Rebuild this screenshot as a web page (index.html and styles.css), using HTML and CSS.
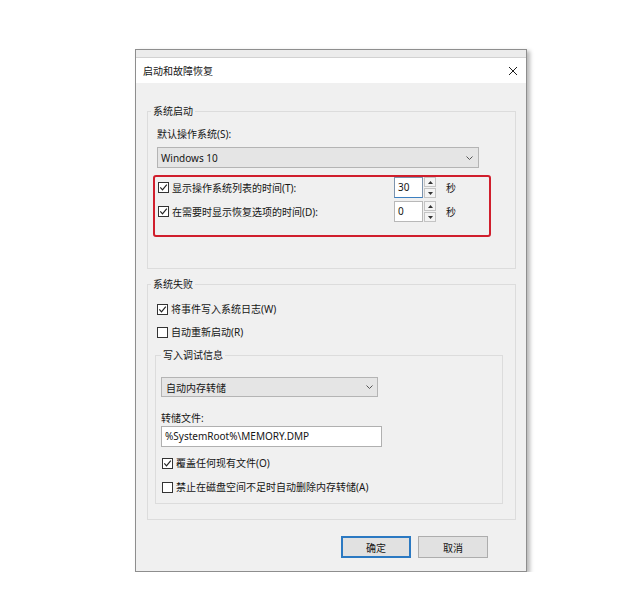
FILE: index.html
```html
<!DOCTYPE html>
<html lang="zh-CN">
<head>
<meta charset="utf-8">
<title>启动和故障恢复</title>
<link rel="stylesheet" href="styles.css">
</head>
<body>
<div class="window">
  <div class="strip"></div>
  <div class="titlebar">
    <span class="title">启动和故障恢复</span>
    <svg class="close" width="10" height="10" viewBox="0 0 10 10"><path d="M1 1L9 9M9 1L1 9" stroke="#1e1e1e" stroke-width="1" fill="none"/></svg>
  </div>
  <div class="client">
    <fieldset class="group g1">
      <legend>系统启动</legend>
      <div class="field-label">默认操作系统(S):</div>
      <div class="combo combo-os"><span>Windows 10</span><svg width="7" height="4" viewBox="0 0 7 4"><path d="M0.5 0.5L3.5 3.5L6.5 0.5" stroke="#555" stroke-width="1" fill="none"/></svg></div>
      <div class="highlight">
        <div class="trow">
          <label class="check"><span class="cb"><svg width="9" height="9" viewBox="0 0 9 9"><path d="M1.3 4.4L3.5 6.8L7.8 1.6" stroke="#222" stroke-width="1.2" fill="none"/></svg></span>显示操作系统列表的时间(T):</label>
          <div class="spin"><span class="spin-val focus">30</span><span class="spin-btns"><span class="sb"><svg width="5" height="3" viewBox="0 0 5 3"><path d="M0 3L2.5 0L5 3Z" fill="#333"/></svg></span><span class="sb"><svg width="5" height="3" viewBox="0 0 5 3"><path d="M0 0L2.5 3L5 0Z" fill="#333"/></svg></span></span></div>
          <span class="unit">秒</span>
        </div>
        <div class="trow trow2">
          <label class="check"><span class="cb"><svg width="9" height="9" viewBox="0 0 9 9"><path d="M1.3 4.4L3.5 6.8L7.8 1.6" stroke="#222" stroke-width="1.2" fill="none"/></svg></span>在需要时显示恢复选项的时间(D):</label>
          <div class="spin"><span class="spin-val">0</span><span class="spin-btns"><span class="sb"><svg width="5" height="3" viewBox="0 0 5 3"><path d="M0 3L2.5 0L5 3Z" fill="#333"/></svg></span><span class="sb"><svg width="5" height="3" viewBox="0 0 5 3"><path d="M0 0L2.5 3L5 0Z" fill="#333"/></svg></span></span></div>
          <span class="unit">秒</span>
        </div>
      </div>
    </fieldset>

    <fieldset class="group g2">
      <legend>系统失败</legend>
      <label class="check row"><span class="cb"><svg width="9" height="9" viewBox="0 0 9 9"><path d="M1.3 4.4L3.5 6.8L7.8 1.6" stroke="#222" stroke-width="1.2" fill="none"/></svg></span>将事件写入系统日志(W)</label>
      <label class="check row row-b"><span class="cb"></span>自动重新启动(R)</label>
      <fieldset class="group g3">
        <legend>写入调试信息</legend>
        <div class="combo combo-dump"><span>自动内存转储</span><svg width="7" height="4" viewBox="0 0 7 4"><path d="M0.5 0.5L3.5 3.5L6.5 0.5" stroke="#555" stroke-width="1" fill="none"/></svg></div>
        <div class="field-label tight">转储文件:</div>
        <div class="textbox">%SystemRoot%\MEMORY.DMP</div>
        <label class="check row inner-row"><span class="cb"><svg width="9" height="9" viewBox="0 0 9 9"><path d="M1.3 4.4L3.5 6.8L7.8 1.6" stroke="#222" stroke-width="1.2" fill="none"/></svg></span>覆盖任何现有文件(O)</label>
        <label class="check row inner-row"><span class="cb"></span>禁止在磁盘空间不足时自动删除内存转储(A)</label>
      </fieldset>
    </fieldset>

    <div class="buttons">
      <button class="btn btn-default">确定</button>
      <button class="btn">取消</button>
    </div>
  </div>
</div>
</body>
</html>
```

FILE: styles.css
```css
html, body {
  margin: 0;
  background: #ffffff;
}
body {
  padding: 49px 0 0 135px;
  font-family: "Noto Sans", "Noto Sans CJK SC", sans-serif;
  font-size: 10px;
  color: #151515;
}
.window {
  width: 390px;
  border: 1px solid #8e8e8e;
  background: #f0f0f0;
  box-shadow: 3px 2px 4px rgba(0, 0, 0, 0.28);
}
.strip {
  height: 7px;
  background: #ececec;
  border-bottom: 1px solid #d2d2d2;
}
.titlebar {
  height: 25px;
  background: #ffffff;
  display: flex;
  align-items: center;
  justify-content: space-between;
  padding: 0 8px 0 7px;
}
.title {
  line-height: 14px;
}
.close {
  display: block;
}
.client {
  padding: 22px 10px 13px 11px;
}
.group {
  margin: 0;
  border: 1px solid #dcdcdc;
  min-width: 0;
}
.group legend {
  padding: 0 2px;
  line-height: 12px;
  font-size: 10px;
}
.g1 {
  padding: 10px 9px 31px 9px;
}
.g1 > legend,
.g2 > legend {
  margin-left: -6px;
}
.g2 {
  margin-top: 9px;
  padding: 11px 12px 15px 9px;
}
.g3 {
  margin: 9px 0 0 -2px;
  padding: 16px 5px 8px 5px;
}
.g3 > legend {
  margin-left: 0;
}
.field-label {
  line-height: 14px;
  margin-bottom: 6px;
}
.field-label.tight {
  margin-top: 14px;
  margin-bottom: 1px;
}
.combo {
  box-sizing: border-box;
  border: 1px solid #b4b4b4;
  background: #e5e5e5;
  display: flex;
  align-items: center;
  justify-content: space-between;
}
.combo svg {
  display: block;
}
.combo-os {
  width: 322px;
  height: 21px;
  padding: 0 5px 0 3px;
  margin-bottom: 7px;
}
.combo-dump {
  width: 217px;
  height: 20px;
  padding: 0 4px 0 4px;
}
.highlight {
  box-sizing: border-box;
  width: 338px;
  margin-left: -4px;
  border: 2px solid #d01e2c;
  border-radius: 3px;
  padding: 0 33px 13px 3px;
}
.trow {
  display: flex;
  align-items: center;
  height: 21px;
}
.trow2 {
  margin-top: 3px;
}
.check {
  display: flex;
  align-items: center;
  gap: 3px;
  line-height: 14px;
}
.trow .check {
  flex: 1;
}
.cb {
  box-sizing: border-box;
  width: 11px;
  height: 11px;
  border: 1px solid #333333;
  background: #ffffff;
  display: flex;
  align-items: center;
  justify-content: center;
  flex: none;
}
.cb svg {
  display: block;
}
.row {
  height: 16px;
}
.row-b {
  margin-top: 7px;
}
.inner-row {
  margin-top: 8px;
  margin-left: 1px;
}
.spin {
  display: flex;
  width: 42px;
  height: 21px;
}
.spin-val {
  box-sizing: border-box;
  width: 29px;
  height: 21px;
  border: 1px solid #b8b8b8;
  background: #ffffff;
  padding-left: 3px;
  line-height: 19px;
}
.spin-val.focus {
  border-color: #7c93ad;
  border-bottom-color: #3c7fc0;
}
.spin-btns {
  margin-left: 1px;
  width: 12px;
  display: flex;
  flex-direction: column;
  gap: 1px;
}
.sb {
  flex: 1;
  box-sizing: border-box;
  border: 1px solid #c4c4c4;
  background: #f4f4f4;
  display: flex;
  align-items: center;
  justify-content: center;
}
.sb svg {
  display: block;
}
.unit {
  margin-left: 10px;
  width: 10px;
  line-height: 14px;
}
.textbox {
  box-sizing: border-box;
  width: 221px;
  height: 21px;
  border: 1px solid #b0b0b0;
  background: #ffffff;
  padding-left: 3px;
  line-height: 19px;
}
.buttons {
  display: flex;
  justify-content: flex-end;
  gap: 7px;
  margin: 16px 28px 0 0;
}
.btn {
  box-sizing: border-box;
  width: 70px;
  height: 22px;
  border: 1px solid #adadad;
  background: #e1e1e1;
  font-family: "Noto Sans", "Noto Sans CJK SC", sans-serif;
  font-size: 10px;
  color: #151515;
  padding: 0;
}
.btn-default {
  border: 2px solid #2b79c2;
}
```
